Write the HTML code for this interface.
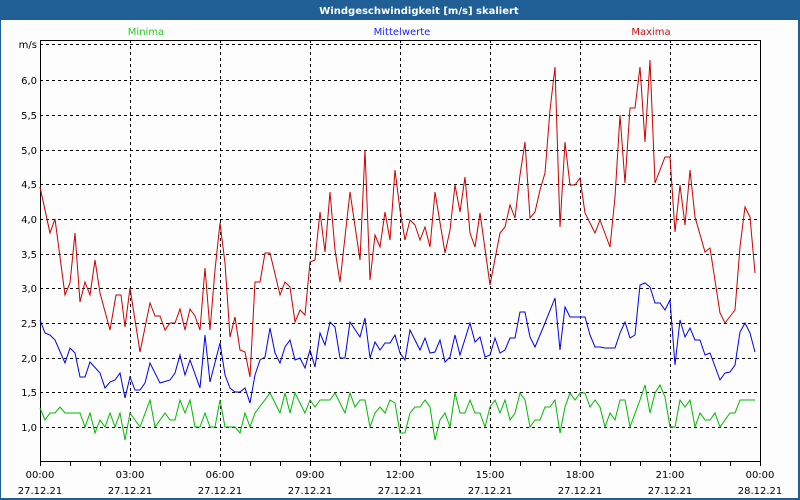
<!DOCTYPE html>
<html><head><meta charset="utf-8"><style>
html,body{margin:0;padding:0;width:800px;height:500px;overflow:hidden;background:#1f5f96}
svg{display:block}
text{font-family:"DejaVu Sans","Liberation Sans",sans-serif;font-size:10px}
</style></head><body>
<svg width="800" height="500" xmlns="http://www.w3.org/2000/svg">
<rect x="0" y="0" width="800" height="500" fill="#1f5f96"/>
<rect x="1" y="20" width="797" height="478" fill="#fcfdfc"/>
<text x="419" y="14" fill="#fff" font-weight="bold" font-size="11" text-anchor="middle">Windgeschwindigkeit [m/s] skaliert</text>
<text x="146" y="35" fill="#22cc22" text-anchor="middle">Minima</text>
<text x="402" y="35" fill="#2222ff" text-anchor="middle">Mittelwerte</text>
<text x="651" y="35" fill="#cc1111" text-anchor="middle">Maxima</text>
<g stroke="#000" stroke-width="1" stroke-dasharray="3,3" fill="none">
<path d="M40 44.5H760M40 80.5H760M40 115.5H760M40 150.5H760M40 184.5H760M40 219.5H760M40 254.5H760M40 288.5H760M40 323.5H760M40 358.5H760M40 392.5H760M40 427.5H760"/>
<path d="M130.5 40V461M220.5 40V461M310.5 40V461M400.5 40V461M490.5 40V461M580.5 40V461M670.5 40V461"/>
</g>
<rect x="40.5" y="40.5" width="720" height="421" fill="none" stroke="#000"/>
<g stroke="#000"><path d="M70.5 461v5M100.5 461v5M130.5 461v5M160.5 461v5M190.5 461v5M220.5 461v5M250.5 461v5M280.5 461v5M310.5 461v5M340.5 461v5M370.5 461v5M400.5 461v5M430.5 461v5M460.5 461v5M490.5 461v5M520.5 461v5M550.5 461v5M580.5 461v5M610.5 461v5M640.5 461v5M670.5 461v5M700.5 461v5M730.5 461v5M760.5 461v5M40.5 461v5"/></g>
<g fill="#000" text-anchor="end">
<text x="37" y="48">m/s</text><text x="37" y="84">6,0</text><text x="37" y="119">5,5</text><text x="37" y="154">5,0</text><text x="37" y="188">4,5</text><text x="37" y="223">4,0</text><text x="37" y="258">3,5</text><text x="37" y="292">3,0</text><text x="37" y="327">2,5</text><text x="37" y="362">2,0</text><text x="37" y="396">1,5</text><text x="37" y="431">1,0</text>
</g>
<g fill="#000" text-anchor="middle">
<text x="40" y="478">00:00</text><text x="40" y="494">27.12.21</text>
<text x="130" y="478">03:00</text><text x="130" y="494">27.12.21</text>
<text x="220" y="478">06:00</text><text x="220" y="494">27.12.21</text>
<text x="310" y="478">09:00</text><text x="310" y="494">27.12.21</text>
<text x="400" y="478">12:00</text><text x="400" y="494">27.12.21</text>
<text x="490" y="478">15:00</text><text x="490" y="494">27.12.21</text>
<text x="580" y="478">18:00</text><text x="580" y="494">27.12.21</text>
<text x="670" y="478">21:00</text><text x="670" y="494">27.12.21</text>
<text x="760" y="478">00:00</text><text x="760" y="494">28.12.21</text>
</g>
<polyline fill="none" stroke="#cc0000" stroke-width="1" points="40,187 50,233 55,219 65,295 70,283 75,233 80,302 85,282 90,295 95,260 100,293 110,330 116,295 121,295 125,327 130,288 140,352 150,303 155,316 160,316 165,330 170,323 175,323 180,309 185,330 190,309 195,316 200,330 205,268 210,330 215,270 220,223 225,263 230,337 235,317 240,350 245,352 250,377 255,282 260,282 265,253 270,253 280,295 285,282 290,287 295,322 300,310 305,315 310,262 315,260 320,212 325,252 330,192 335,250 340,282 350,192 360,260 365,150 370,280 375,235 380,247 385,212 390,240 395,170 400,210 405,240 410,220 415,225 420,240 425,227 430,247 435,192 445,253 450,230 455,185 460,212 465,177 470,233 475,247 480,213 490,285 500,233 505,227 510,205 515,218 520,175 525,142 530,218 535,212 540,190 545,173 550,110 555,67 560,227 565,142 570,185 575,185 580,178 585,213 595,233 600,220 610,247 615,197 620,115 625,183 630,108 635,108 640,67 645,142 650,60 655,183 665,157 670,157 675,232 680,185 685,225 690,170 695,217 705,252 710,248 720,313 725,323 735,310 740,247 745,207 750,217 755,273"/>
<polyline fill="none" stroke="#0000ee" stroke-width="1" points="40,320 45,333 50,335 55,340 65,363 70,348 75,353 80,377 85,377 90,362 100,373 105,388 110,382 115,380 120,373 125,398 130,377 135,390 140,390 145,383 150,363 160,383 170,380 175,373 180,355 185,375 190,360 200,388 205,335 210,382 220,343 225,375 230,388 235,392 240,392 245,388 250,403 255,375 260,360 265,357 270,328 275,353 280,363 285,347 290,340 295,360 300,358 305,368 310,350 315,367 320,333 325,345 330,322 335,327 340,358 345,358 350,322 360,337 365,318 370,358 375,342 380,350 385,343 390,343 395,335 400,353 405,360 410,330 420,350 425,338 430,353 435,352 440,340 445,362 450,357 455,335 460,355 470,323 475,342 480,337 485,357 490,355 495,338 500,353 505,350 510,338 515,338 520,312 525,312 530,337 535,347 545,323 555,298 560,350 565,307 570,317 580,317 585,317 590,335 595,347 600,347 605,348 615,348 620,333 625,322 630,338 635,335 640,285 645,283 650,287 655,303 660,303 665,310 670,300 675,365 680,320 685,337 690,328 695,340 700,340 705,355 710,353 720,380 725,373 730,372 735,365 740,332 745,323 750,333 755,352"/>
<polyline fill="none" stroke="#00bb00" stroke-width="1" points="40,408 45,420 50,413 55,413 60,407 65,413 80,413 85,427 90,413 95,433 100,420 105,427 110,413 115,427 120,413 125,440 130,413 140,427 150,400 155,427 165,413 170,420 175,420 180,400 185,413 190,400 195,427 200,427 205,413 210,427 215,427 220,400 225,427 235,427 240,433 245,413 250,427 255,413 270,393 280,413 285,393 290,413 295,393 305,413 310,400 315,407 320,400 330,400 335,393 345,413 350,393 355,407 360,400 365,400 370,427 375,413 380,407 385,413 390,400 395,403 400,433 405,433 410,413 415,407 420,407 425,400 430,407 435,440 440,420 445,413 450,427 455,393 460,413 465,413 470,400 475,413 480,413 485,427 490,407 495,400 500,413 505,400 510,420 515,413 520,393 525,400 530,427 535,420 540,420 545,407 550,407 555,400 560,433 565,407 570,393 575,400 580,393 585,393 590,407 595,400 600,407 605,427 610,413 615,420 620,400 625,400 630,427 640,400 645,385 650,413 655,393 660,385 665,397 670,427 675,427 680,400 685,407 690,400 695,427 700,413 705,420 710,420 715,413 720,427 730,413 735,413 740,400 755,400"/>
</svg>
</body></html>
